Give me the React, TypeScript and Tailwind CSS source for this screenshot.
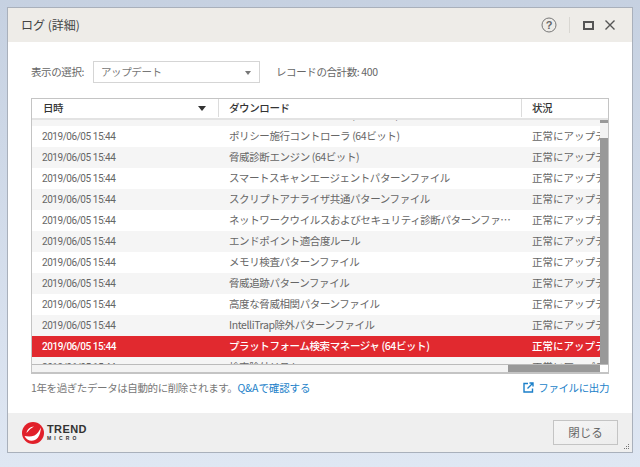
const rows = [
  { name: "ウイルスパターンファイル (64ビット)", tone: "bg-[#f5f5f5]" },
  { name: "ポリシー施行コントローラ (64ビット)", tone: "bg-white" },
  { name: "脅威診断エンジン (64ビット)", tone: "bg-[#f5f5f5]" },
  { name: "スマートスキャンエージェントパターンファイル", tone: "bg-white" },
  { name: "スクリプトアナライザ共通パターンファイル", tone: "bg-[#f5f5f5]" },
  { name: "ネットワークウイルスおよびセキュリティ診断パターンファイル", tone: "bg-white" },
  { name: "エンドポイント適合度ルール", tone: "bg-[#f5f5f5]" },
  { name: "メモリ検査パターンファイル", tone: "bg-white" },
  { name: "脅威追跡パターンファイル", tone: "bg-[#f5f5f5]" },
  { name: "高度な脅威相関パターンファイル", tone: "bg-white" },
  { name: "IntelliTrap除外パターンファイル", tone: "bg-[#f5f5f5]" },
  { name: "プラットフォーム検索マネージャ (64ビット)", tone: "bg-[#e1292f]", selected: true },
  { name: "検索除外リスト", tone: "bg-[#f5f5f5]" },
];

const jp = "font-['Noto_Sans_CJK_JP','Noto_Sans',sans-serif]";
const num = "font-['Roboto','Noto_Sans_CJK_JP',sans-serif]";

function Logo() {
  return (
    <div className="flex items-center gap-[3px]">
      <svg width="22" height="22" viewBox="0 0 22 22">
        <circle cx="11" cy="11" r="11" fill="#e1202a" />
        <path d="M2.5 14C5 19.5 12 20.5 16 15.5C18 12.5 18.6 9 19 5.5C17.2 9 15.5 12 12.5 13.5C9 15 5 14.5 2.5 14Z" fill="#fff" />
        <path d="M4.5 11C5 7.5 8 4.5 12 4.5C9.5 5.8 7 8 4.5 11Z" fill="#fff" />
      </svg>
      <div className="flex flex-col font-['Liberation_Sans',sans-serif] font-bold text-[#333] leading-none">
        <span className="text-[11px] tracking-[0.4px]">TREND</span>
        <span className="mt-[1px] text-[5px] tracking-[3.2px]">MICRO</span>
      </div>
    </div>
  );
}

export default function App() {
  return (
    <div className={`h-[467px] w-[640px] overflow-hidden bg-gradient-to-b from-[#c6d1e1] to-[#dfe7f3] pl-2 pt-2 ${jp}`}>
      <div className="flex h-[444px] w-[624px] flex-col bg-white shadow-[0_0_0_1px_#a9b0bb]">
        {/* Title bar */}
        <div className="flex h-[34px] shrink-0 items-center bg-[#eeece8] pl-[13px] pr-[16px]">
          <span className="text-[12px] text-[#444]">ログ (詳細)</span>
          <div className="ml-auto flex items-center text-[#555]">
            <svg width="16" height="16" viewBox="0 0 16 16">
              <circle cx="8" cy="8" r="7" fill="none" stroke="#777" strokeWidth="1" />
              <text x="8" y="12" textAnchor="middle" fontSize="11" fontWeight="700" fill="#666" fontFamily="Liberation Sans">?</text>
            </svg>
            <div className="ml-[12px] h-[16px] w-px bg-[#d9d7d2]" />
            <div className="ml-[13px] h-[9px] w-[11px] border-2 border-[#555]" />
            <svg className="ml-[10px]" width="12" height="12" viewBox="0 0 12 12">
              <path d="M1.5 1.5L10.5 10.5M10.5 1.5L1.5 10.5" stroke="#555" strokeWidth="1.4" fill="none" />
            </svg>
          </div>
        </div>

        {/* Content */}
        <div className="flex flex-1 flex-col px-[23px] pt-[19px] text-[10.5px] tracking-[-0.4px]">
          <div className="flex h-[22px] items-center text-[#666]">
            <span className="w-[62px]">表示の選択:</span>
            <div className="flex h-[22px] w-[167px] items-center border border-[#d5d5d5] pl-[7px] pr-[8px] text-[#777]">
              アップデート
              <span className="ml-auto mt-[2px] h-0 w-0 border-x-[3.5px] border-t-[4px] border-x-transparent border-t-[#777]" />
            </div>
            <span className="ml-[16px]">レコードの合計数: 400</span>
          </div>

          <div className="mt-[15px] flex h-[276px] w-[578px] flex-col overflow-hidden border border-b-2 border-[#c4c4c4]">
            <div className="relative z-10 flex h-[21px] shrink-0 items-center border-b-2 border-[#e3e3e3] bg-white pb-px font-medium text-[#333]">
              <div className="flex h-full w-[187px] items-center border-r border-[#dcdcdc] pl-[11px] pr-[12px]">
                日時
                <span className="ml-auto h-0 w-0 border-x-[4.5px] border-t-[5px] border-x-transparent border-t-[#333]" />
              </div>
              <div className="flex h-full w-[303px] items-center border-r border-[#dcdcdc] pl-[10px]">ダウンロード</div>
              <div className="pl-[10px]">状況</div>
            </div>

            <div className="relative flex-1 overflow-hidden">
              {/* scrolled list */}
              <div className="-mt-[15px] mr-[8px] overflow-hidden">
                {rows.map((r) => (
                  <div key={r.name} className={`flex h-[21px] items-center whitespace-nowrap ${r.tone} ${r.selected ? "font-medium text-white" : "text-[#666]"}`}>
                    <span className={`w-[187px] shrink-0 pl-[10px] text-[10px] tracking-[-0.45px] ${num}`}>2019/06/05 15:44</span>
                    <span className="w-[303px] shrink-0 truncate pb-[2px] pl-[10px] pr-[10px]">{r.name}</span>
                    <span className="shrink-0 pb-[2px] pl-[10px] tracking-normal">正常にアップデート</span>
                  </div>
                ))}
              </div>

              {/* vertical scrollbar */}
              <div className="absolute inset-y-0 right-0 w-[8px] bg-[#999]">
                <div className="mt-[3px] h-[15px] bg-[#f3f3f3]" />
              </div>
              {/* horizontal scrollbar */}
              <div className="absolute inset-x-0 bottom-0 flex h-[8px] border-t border-[#bbb] bg-[#f3f3f3]">
                <div className="ml-auto h-full w-[92px] bg-[#999]" />
                <div className="h-full w-[8px] bg-white" />
              </div>
            </div>
          </div>

          <div className="mt-[6px] flex w-[578px] items-center text-[#777]">
            <span>1年を過ぎたデータは自動的に削除されます。</span>
            <span className="text-[#1b7fc9] tracking-[-0.1px]">Q&amp;Aで確認する</span>
            <span className="ml-auto flex items-center gap-[4px] text-[#1b7fc9]">
              <svg width="11" height="11" viewBox="0 0 11 11" fill="none" stroke="#1b7fc9">
                <path d="M5 1.5H1V10H9.5V6.5" strokeWidth="1.4" />
                <path d="M4.5 6.5L9.5 1.5M6.5 1H10V4.5" strokeWidth="1.4" />
              </svg>
              ファイルに出力
            </span>
          </div>
        </div>

        {/* Footer */}
        <div className="relative flex h-[39px] shrink-0 items-center justify-between bg-[#efefef] pl-[14px] pr-[14px]">
          <Logo />
          <button className="flex h-[25px] w-[65px] items-center justify-center border border-[#c4c4c4] bg-gradient-to-br from-[#f5f5f5] to-[#ededed] text-[11.5px] text-[#666]">閉じる</button>
          <div className="absolute bottom-[3px] right-[3px] grid grid-cols-3 gap-[1px]">
            {[0, 1, 2, 3, 4, 5, 6, 7, 8].map((i) => (
              <span key={i} className={`h-[1px] w-[1px] ${i === 0 || i === 1 || i === 3 ? "bg-transparent" : "bg-[#777]"}`} />
            ))}
          </div>
        </div>
      </div>
    </div>
  );
}
